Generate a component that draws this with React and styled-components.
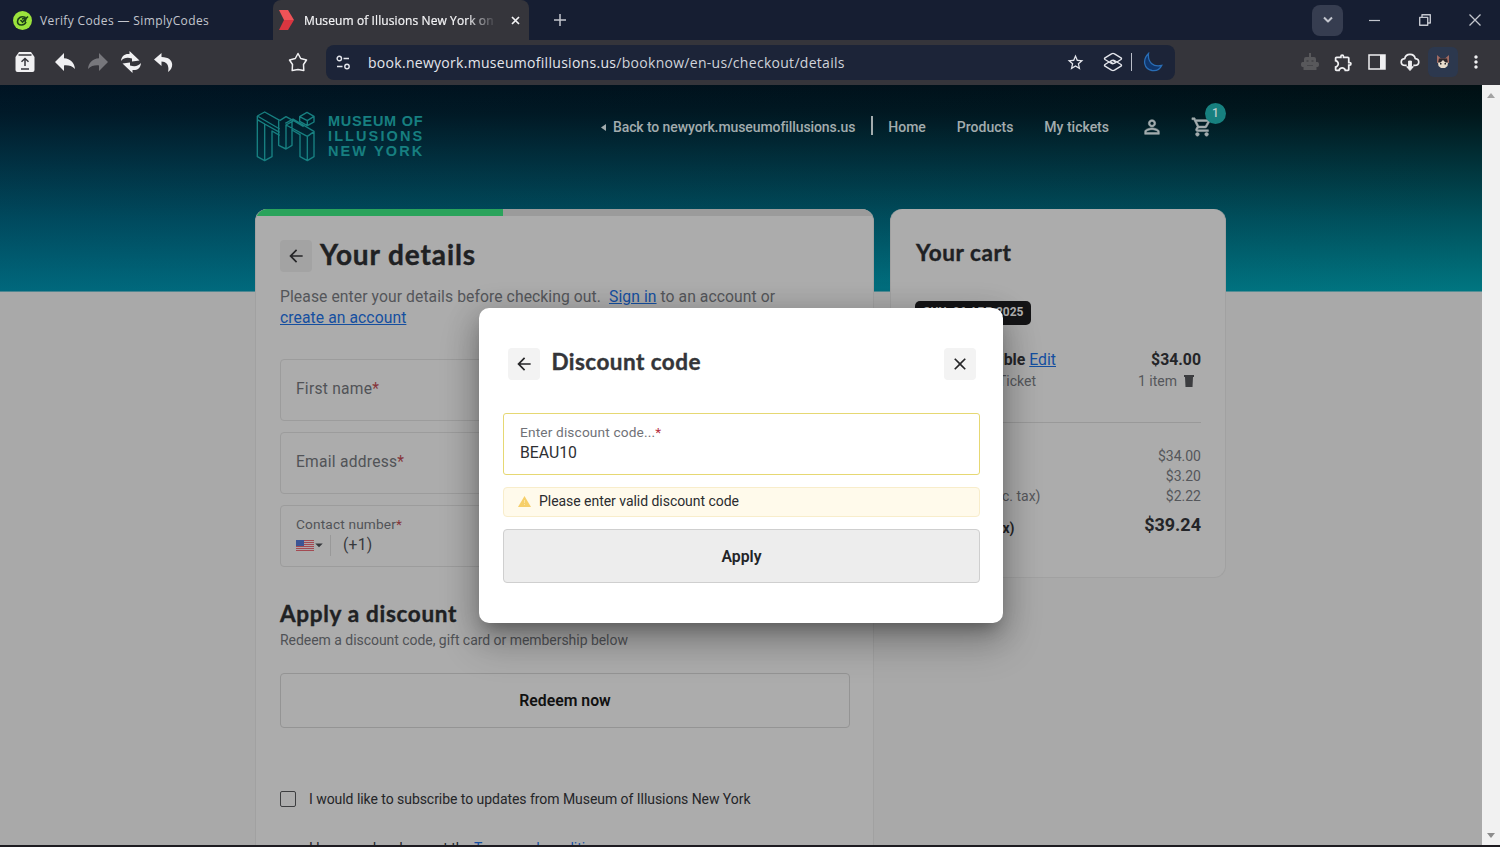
import React from "react";
import styled, { createGlobalStyle, css } from "styled-components";
import {
  MdArrowBack,
  MdArrowDropDown,
  MdClose,
  MdMoreVert,
  MdOutlineShoppingCart,
  MdPersonOutline,
  MdStarOutline,
  MdOutlineExtension,
} from "react-icons/md";

const GlobalStyle = createGlobalStyle`
  * {
    box-sizing: border-box;
  }
  body {
    margin: 0;
    overflow: hidden;
    background: #a9a9a9;
    font-family: Roboto, "Liberation Sans", sans-serif;
  }
  h1, h2, p {
    margin: 0;
  }
  svg {
    display: block;
    flex: none;
  }
`;

const Window = styled.div`
  width: 1500px;
  height: 847px;
  display: flex;
  flex-direction: column;
  overflow: hidden;
  border-bottom: 2px solid #1d1b20;
`;

/* ---------- browser chrome ---------- */

const TabBar = styled.div`
  height: 40px;
  flex: none;
  display: flex;
  background: #161e32;
  font-family: "Open Sans", "Noto Sans", sans-serif;
  font-size: 12px;
  color: #c3c6ce;
`;

const Tab = styled.div`
  display: flex;
  align-items: center;
  height: 40px;
  width: ${({ $width }) => $width}px;
  padding: 0 8px 0 ${({ $active }) => ($active ? 6 : 13)}px;
  border-radius: 8px 8px 0 0;
  white-space: nowrap;
  ${({ $active }) =>
    $active &&
    css`
      background: #35353b;
      color: #f4f4f6;
    `}
`;

const TabTitle = styled.span`
  margin-left: ${({ $gap }) => $gap}px;
  letter-spacing: ${({ $spacing }) => $spacing || 0}px;
  width: ${({ $width }) => $width}px;
  ${({ $fade }) =>
    $fade &&
    css`
      -webkit-text-stroke: 0.2px #f4f4f6;
      mask-image: linear-gradient(90deg, #000 84%, transparent);
    `}
`;

const TabClose = styled.span`
  margin-left: 14px;
`;

const NewTab = styled.div`
  display: flex;
  align-items: center;
  padding-left: 25px;
`;

const WindowControls = styled.div`
  margin-left: auto;
  display: flex;
  align-items: center;
  padding-right: 19px;
  gap: 38px;
`;

const TabSearch = styled.div`
  display: grid;
  place-items: center;
  width: 31px;
  height: 31px;
  margin-right: -13px;
  border-radius: 8px;
  background: #363d50;
`;

const Toolbar = styled.div`
  height: 45px;
  flex: none;
  display: flex;
  align-items: center;
  background: #35353b;
  color: #f0f0f2;
  padding: 0 17px 1px 14px;
`;

const NavIcons = styled.div`
  display: flex;
  align-items: center;
  gap: 11px;
  width: 274px;
`;

const AddressBar = styled.div`
  display: flex;
  align-items: center;
  width: 849px;
  height: 35px;
  margin-left: 18px;
  padding: 0 12px 0 10px;
  border-radius: 8px;
  background: #1c2438;
  color: #e4e6ec;
  font-family: "Open Sans", "Noto Sans", sans-serif;
  font-size: 14px;
`;

const Url = styled.span`
  margin-left: 17px;
  flex: 1;
  letter-spacing: 0.29px;
  white-space: nowrap;
  span {
    color: #d0d3db;
  }
`;

const AddressDivider = styled.span`
  width: 1px;
  height: 18px;
  margin: 0 11px 0 8px;
  background: #b9bdc8;
`;

const Extensions = styled.div`
  margin-left: auto;
  display: flex;
  align-items: center;
  gap: 14px;
`;

const Avatar = styled.div`
  display: grid;
  place-items: center;
  width: 30px;
  height: 30px;
  margin: 0 -6px;
  border-radius: 6px;
  background: #2c384e;
`;

/* ---------- page ---------- */

const Viewport = styled.div`
  position: relative;
  flex: 1;
  min-height: 0;
  display: flex;
`;

const Page = styled.div`
  width: 1482px;
  overflow: hidden;
  background-color: #a9a9a9;
  background-image: linear-gradient(
      90deg,
      rgba(0, 40, 105, 0.18),
      rgba(0, 40, 105, 0.06) 80%,
      transparent
    ),
    linear-gradient(#000f13, #01171b 14%, #013037 36%, #00525d 66%, #007681);
  background-size: 100% 206.5px;
  background-repeat: no-repeat;
`;

const Scrollbar = styled.div`
  width: 18px;
  display: flex;
  flex-direction: column;
  justify-content: space-between;
  align-items: center;
  padding: 8px 0 7px;
  background: #f1f1f1;
`;

const Header = styled.header`
  display: flex;
  align-items: flex-start;
  height: 124px;
  padding: 0 256px 0 256px;
  color: #a3acae;
`;

const Brand = styled.div`
  display: flex;
  align-items: center;
  margin-top: 26px;
  gap: 12px;
  color: #177f80;
  font: bold 14.5px/15px "Liberation Sans", sans-serif;
`;

const BrandLine = styled.div`
  letter-spacing: ${({ $spacing }) => $spacing}px;
  white-space: nowrap;
`;

const Nav = styled.nav`
  margin-left: auto;
  display: flex;
  align-items: center;
  margin-top: 32px;
  height: 20px;
  font-size: 14px;
  font-weight: 500;
  white-space: nowrap;
`;

const NavLink = styled.a`
  margin-left: ${({ $left }) => $left || 0}px;
  margin-right: ${({ $gap }) => $gap}px;
  letter-spacing: ${({ $spacing }) => $spacing || 0}px;
`;

const NavBar = styled.span`
  width: 2px;
  height: 19px;
  margin: -3px 15px 0 16px;
  background: #a3acae;
`;

const HeavyIcon = styled.span`
  path:not([fill="none"]) {
    stroke: currentColor;
    stroke-width: 0.6px;
  }
`;

const CartLink = styled(HeavyIcon)`
  position: relative;
  margin: 0 13px 0 28px;
`;

const CartBadge = styled.span`
  position: absolute;
  left: 14px;
  top: -13px;
  width: 21px;
  height: 21px;
  border-radius: 50%;
  background: #17807f;
  color: #b6c9c9;
  font-size: 12px;
  line-height: 21px;
  text-align: center;
`;

const Columns = styled.main`
  display: flex;
  align-items: flex-start;
  gap: 16px;
  padding-left: 255px;
`;

const Card = styled.section`
  width: ${({ $width }) => $width}px;
  height: ${({ $height }) => $height}px;
  overflow: hidden;
  border: 1px solid #a1a1a1;
  border-top: 0;
  border-radius: 12px;
  background: #acacac;
`;

const Progress = styled.div`
  height: 7px;
  background: #9b9b9b;
  &::before {
    content: "";
    display: block;
    width: 247px;
    height: 100%;
    background: #2aa35b;
  }
`;

const DetailsBody = styled.div`
  padding: 0 23px 0 24px;
`;

const Heading = styled.h1`
  font-family: Lato, sans-serif;
  font-weight: 700;
  font-size: ${({ $size }) => $size}px;
  line-height: 30px;
  letter-spacing: ${({ $spacing }) => $spacing || 0}px;
  color: ${({ $color }) => $color || "#202123"};
  -webkit-text-stroke: 0.4px ${({ $color }) => $color || "#202123"};
`;

const TitleRow = styled.div`
  display: flex;
  align-items: center;
  gap: ${({ $gap }) => $gap}px;
  margin-top: ${({ $top }) => $top || 0}px;
  h1,
  h2 {
    margin-top: -4px;
  }
`;

const SquareButton = styled.button`
  display: grid;
  place-items: center;
  width: 32px;
  height: 32px;
  padding: 0;
  border: 0;
  border-radius: 4px;
  background: ${({ $bg }) => $bg};
  color: #262628;
`;

const Intro = styled.p`
  margin: 14px 0 31px;
  font-size: 15.7px;
  line-height: 21px;
  letter-spacing: 0.08px;
  color: #54565a;
`;

const Link = styled.a`
  color: #154fa0;
  text-decoration: underline;
`;

const Field = styled.div`
  height: 62px;
  margin-bottom: ${({ $gap }) => $gap || 11}px;
  padding: ${({ $filled }) => ($filled ? "9px 15px" : "18px 15px")};
  border: 1px solid #9c9c9c;
  border-radius: 4px;
  font-size: 15.6px;
  line-height: 22px;
  letter-spacing: 0.25px;
  color: #515357;
`;

const Required = styled.span`
  color: ${({ $color }) => $color || "#86343a"};
`;

const SmallLabel = styled.div`
  font-size: 13.7px;
  line-height: 19px;
  letter-spacing: 0.15px;
`;

const Phone = styled.div`
  display: flex;
  align-items: center;
  height: 22px;
  color: #36383c;
  svg + svg {
    margin: 0 -4.5px;
  }
`;

const PhoneDivider = styled.span`
  width: 1px;
  height: 21px;
  margin: 0 12px 0 7px;
  background: #999;
`;

const Note = styled.p`
  margin-top: 1px;
  font-size: 14px;
  line-height: 20px;
  letter-spacing: -0.04px;
  color: #505256;
`;

const RedeemButton = styled.button`
  display: block;
  width: 100%;
  height: 55px;
  margin-top: 23px;
  border: 1px solid #949494;
  border-radius: 4px;
  background: transparent;
  font: 600 15.8px Roboto, sans-serif;
  color: #111;
`;

const Consent = styled.label`
  display: flex;
  align-items: center;
  gap: 13px;
  height: 20px;
  margin-top: ${({ $top }) => $top}px;
  font-size: 14px;
  line-height: 20px;
  letter-spacing: -0.05px;
  color: #242528;
`;

const Box = styled.span`
  width: 16px;
  height: 16px;
  border: ${({ $hidden }) => ($hidden ? 0 : "1px solid #3d3e40")};
  border-radius: 2px;
`;

/* ---------- cart ---------- */

const CartBody = styled.div`
  padding: 29px 24px 0 24px;
  h2 {
    padding-left: 1px;
  }
`;

const DateTag = styled.div`
  display: inline-block;
  height: 24px;
  margin: 33px 0 24px;
  padding: 0 8px;
  border-radius: 5px;
  background: #151517;
  color: #b2b2b2;
  font-size: 12px;
  font-weight: 700;
  line-height: 22px;
`;

const CartRow = styled.div`
  display: flex;
  justify-content: space-between;
  height: ${({ $height }) => $height || 20}px;
  line-height: ${({ $height }) => $height || 20}px;
  font-size: ${({ $size }) => $size || 14}px;
  font-weight: ${({ $bold }) => ($bold ? 700 : 400)};
  color: ${({ $bold }) => ($bold ? "#242528" : "#55575b")};
`;

const RowLabel = styled.span`
  width: ${({ $width }) => $width}px;
  padding-top: ${({ $drop }) => $drop || 0}px;
  text-align: right;
  white-space: nowrap;
  font-size: ${({ $size }) => $size || 14}px;
  a {
    font-weight: 400;
    font-size: 15.8px;
  }
`;

const Quantity = styled.span`
  display: flex;
  align-items: center;
  gap: 7px;
  margin-right: 7px;
`;

const Rule = styled.div`
  height: 1px;
  margin: 31px 0 23px;
  background: #999;
`;

/* ---------- modal ---------- */

const ModalLayer = styled.div`
  position: absolute;
  left: 479px;
  top: 223px;
  width: 524px;
  height: 315px;
  padding: 40px 23px 0 24px;
  border-radius: 10px;
  background: #fff;
  box-shadow: 0 11px 15px -7px rgba(0, 0, 0, 0.25),
    0 20px 38px 3px rgba(0, 0, 0, 0.2), 0 6px 30px 4px rgba(0, 0, 0, 0.16);
`;

const ModalTitle = styled(TitleRow)`
  padding: 0 4px 0 5px;
  button:last-child {
    margin-left: auto;
  }
`;

const CodeField = styled.div`
  height: 62px;
  margin-top: 33px;
  padding: 9px 16px;
  border: 1px solid #e6d873;
  border-radius: 3px;
  color: #707277;
`;

const CodeValue = styled.div`
  font-size: 15.8px;
  line-height: 22px;
  color: #2e3033;
`;

const Warning = styled.div`
  display: flex;
  align-items: center;
  gap: 8px;
  height: 30px;
  margin-top: 12px;
  padding: 0 13px 2px 14px;
  border: 1px solid #f8edcb;
  border-radius: 4px;
  background: #fffaeb;
  color: #2b2c2f;
  font-size: 14px;
  letter-spacing: -0.04px;
`;

const ApplyButton = styled.button`
  display: block;
  width: 100%;
  height: 54px;
  margin-top: 12px;
  padding-top: 2px;
  border: 1px solid #cfcfcf;
  border-radius: 4px;
  background: #ededed;
  color: #232427;
  font: 600 15.8px Roboto, sans-serif;
`;

const Stroke = ({ w = 18, h = 18, box = "0 0 18 18", width = 1.5, children }) => (
  <svg
    width={w}
    height={h}
    viewBox={box}
    fill="none"
    stroke="currentColor"
    strokeWidth={width}
    strokeLinejoin="round">
    {children}
  </svg>
);

const BoldArrow = ({ flip, color = "currentColor" }) => (
  <svg width="22" height="20" viewBox="0 0 22 20" fill={color}>
    <path
      transform={flip ? "matrix(-1 0 0 1 22 0)" : undefined}
      d="M10 1 1 10l9 9v-5.600c4.500-.3 8 .4 11 3.600-.5-6-4.500-10.200-11-10.700z"
    />
  </svg>
);

const MuseumLogo = () => (
  <Stroke w={60} h={51} box="47 63 180 153" width={4.2}>
    <path d="M51 78 73 66l45 25M51 78v122l22 12 22-12v-77l23 13M73 212V102l45 25M51 78l67 39M73 102l-22-13" />
    <path d="M115 91v75l22 11 18-11v-46l24 14v66l22 12 20-12v-76l-63-37-23 13M137 177v-72l64 34M201 212v-73l20-14M155 120v-24M137 105l23-13 30 18M118 92l19-12 22 12" />
    <path d="M178 80 200 67l21 12v17l-20 11-23-13zM178 80l23 12 20-13M201 92v15" />
  </Stroke>
);

const UsFlag = () => (
  <svg width="18" height="11" viewBox="0 0 18 11" shapeRendering="crispEdges">
    <path fill="#b0a6aa" d="M0 0h18v11H0z" />
    <path
      fill="#a34a52"
      d="M0 0h18v1H0zM0 2h18v1H0zM0 4h18v1H0zM0 6h18v1H0zM0 8h18v1H0zM0 10h18v1H0z"
    />
    <path fill="#3c5595" d="M0 0h8v6H0z" />
  </svg>
);

const BrowserTabs = () => (
  <TabBar>
    <Tab $width={273}>
      <svg width="19" height="19" viewBox="0 0 19 19">
        <circle cx="9.500" cy="9.500" r="9.500" fill="#9be33c" />
        <g fill="none" stroke="#1d4218" strokeWidth="1.600">
          <path d="M12.500 6.500C8 4.500 4.500 7 4.500 10.500c0 4.500 7 4.500 8.500.500M7.500 9l2 2L15 5.500" />
          <path d="m9 8 4-1-1 4" />
        </g>
      </svg>
      <TabTitle $gap={8} $spacing={0.37}>
        Verify Codes — SimplyCodes
      </TabTitle>
    </Tab>
    <Tab $active $width={256}>
      <svg width="16" height="20" viewBox="0 0 16 20">
        <path fill="#ef5357" d="M0 0h9l6 10H5z" />
        <path fill="#d93640" d="M5 10h10L9 20H0z" />
      </svg>
      <TabTitle $gap={9} $width={193} $spacing={0.1} $fade>
        Museum of Illusions New York on
      </TabTitle>
      <TabClose>
        <Stroke w={9} h={9} box="0 0 9 9" width={1.7}>
          <path d="m1 1 7 7M8 1 1 8" />
        </Stroke>
      </TabClose>
    </Tab>
    <NewTab>
      <Stroke w={12} h={12} box="0 0 12 12" width={1.5}>
        <path d="M6 0v12M0 6h12" />
      </Stroke>
    </NewTab>
    <WindowControls>
      <TabSearch>
        <Stroke w={10} h={8} box="0 0 10 8" width={2}>
          <path d="m1 1.500 4 4 4-4" />
        </Stroke>
      </TabSearch>
      <Stroke w={13} h={12} box="0 0 13 12" width={1.2}>
        <path d="M1 6.500h11" />
      </Stroke>
      <Stroke w={12} h={12} box="0 0 12 12" width={1.4}>
        <path d="M.7 3.400h8v7.900h-8zM3 3V.7h8.300V9H9" />
      </Stroke>
      <Stroke w={12} h={12} box="0 0 12 12" width={1.3}>
        <path d="m.5.5 11 11M11.500.5l-11 11" />
      </Stroke>
    </WindowControls>
  </TabBar>
);

const BrowserToolbar = () => (
  <Toolbar>
    <NavIcons>
      <svg width="22" height="22" viewBox="0 0 22 22">
        <path fill="#f0f0f2" d="M5 1h12l3.500 5v13a2 2 0 0 1-2 2h-15a2 2 0 0 1-2-2V6z" />
        <path
          fill="none"
          stroke="#35353b"
          strokeWidth="1.500"
          d="M4.500 4h13M11 15V7.500M7.500 10.800 11 7.500l3.500 3.300M7 18h8"
        />
      </svg>
      <span style={{ marginLeft: -4 }} />
      <BoldArrow />
      <BoldArrow flip color="#77777c" />
      <svg width="22" height="22" viewBox="0 0 22 22" fill="currentColor">
        <path d="M1 10C1.500 4.500 5 2.500 9.500 3V0l10 9.500L12 10.500V7.500C7 6 3.500 7 1 10z" />
        <path d="M21 12c-.5 5.500-4 7.500-8.500 7V22l-10-9.500 7.500-1V14.500c5 1.500 8.500.5 11-2.500z" />
      </svg>
      <svg width="20" height="21" viewBox="0 0 20 21" fill="currentColor">
        <path d="m8.500 1-7.500 6.500 7.500 6.500V9.500C14 9.500 16.500 14 15 20c7-5 5.500-15-6.500-15z" />
      </svg>
    </NavIcons>
    <Stroke w={20} h={20} box="0 0 20 20" width={1.5}>
      <path d="M10 1.500 12.700 6.500 18.500 8l-3 4.500.3 6L10 17.500 4.200 18.500l.3-6L1.500 8l5.800-1.500z" />
    </Stroke>
    <AddressBar>
      <Stroke w={15} h={15} box="0 0 15 15" width={1.4}>
        <circle cx="3.300" cy="3.500" r="2.200" />
        <path d="M7.500 3.500H13M1 11.500h5.500" />
        <circle cx="11" cy="11.500" r="2.200" />
      </Stroke>
      <Url>
        book.newyork.museumofillusions.us<span>/booknow/en-us/checkout/details</span>
      </Url>
      <MdStarOutline size={19} />
      <span style={{ width: 18 }} />
      <Stroke w={20} h={20} box="0 0 20 20" width={1.4}>
        <path d="M14 10 18 7.500Q19 6.500 18 5.800L11.500 1.800Q10 1 8.500 1.800L2 5.800Q1 6.500 2 7.500L8.500 11.500Q10 12.300 13 10.500L10 8.500" />
        <path d="M6 10 2 12.500Q1 13.500 2 14.200L8.500 18.200Q10 19 11.500 18.200L18 14.200Q19 13.500 18 12.500L11.500 8.500Q10 7.700 7 9.500L10 11.500" />
      </Stroke>
      <AddressDivider />
      <svg width="20" height="20" viewBox="0 0 20 20">
        <path
          fill="#10366c"
          stroke="#296db5"
          strokeWidth="1.300"
          d="M5.500 1.500C-1 8 1 17 9 18.500c4.500.7 8-1.500 9.700-5C10 15.500 4.500 10 5.500 1.500z"
        />
      </svg>
    </AddressBar>
    <Extensions>
      <svg width="18" height="18" viewBox="0 0 18 18">
        <path
          fill="#58585b"
          d="M8 0h2v4h3a2 2 0 0 1 2 2v3h1.500c2 0 2 5 0 5H15.500v3h-13v-3H1.500c-2 0-2-5 0-5H3V6a2 2 0 0 1 2-2h3z"
        />
        <path fill="#46464a" d="M5.500 7h2v2h-2zM10.500 7h2v2h-2zM6 12h6v1H6z" />
      </svg>
      <MdOutlineExtension size={21} />
      <svg width="18" height="16" viewBox="0 0 18 16">
        <path fill="none" stroke="#f0f0f2" strokeWidth="1.500" d="M1 1h16v14H1z" />
        <path fill="#f0f0f2" d="M12 1h5v14h-5z" />
      </svg>
      <Stroke w={20} h={20} box="0 0 21 20" width={1.8}>
        <path d="M7 13.500H5.500C0 13.500 0 7 5 6.500 6 .5 15 .5 16 6.500c5 .5 5 7-.5 7H14" />
        <path fill="currentColor" strokeWidth="1" d="M9 9h3v6h2l-3.500 4L7 15h2z" />
      </Stroke>
      <Avatar>
        <svg width="14" height="14" viewBox="0 0 14 14">
          <path fill="#a06a62" d="M1 0l4 3.500h4L13 0v8H1z" />
          <path fill="#2c262a" d="M3 3.500h8L12 8H2z" />
          <path fill="#e8dccb" d="M2 7.500h2.500L7 5l2.500 2.500H12l-.5 3.500L9 13H5l-2.500-2z" />
          <path fill="#2a282c" d="M4 8h1.500v1.500H4zM8.500 8H10v1.500H8.500z" />
        </svg>
      </Avatar>
      <MdMoreVert size={20} style={{ margin: "0 -3px 0 0" }} />
    </Extensions>
  </Toolbar>
);

const SiteHeader = () => (
  <Header>
    <Brand>
      <MuseumLogo />
      <div>
        <BrandLine $spacing={0.75}>MUSEUM OF</BrandLine>
        <BrandLine $spacing={2.1}>ILLUSIONS</BrandLine>
        <BrandLine $spacing={2.1}>NEW YORK</BrandLine>
      </div>
    </Brand>
    <Nav>
      <svg width="5" height="7" viewBox="0 0 5 7" fill="currentColor">
        <path d="M5 0v7L0 3.500z" />
      </svg>
      <NavLink $left={7} $gap={0} $spacing={-0.09}>
        Back to newyork.museumofillusions.us
      </NavLink>
      <NavBar />
      <NavLink $gap={31}>Home</NavLink>
      <NavLink $gap={31}>Products</NavLink>
      <NavLink $gap={32}>My tickets</NavLink>
      <HeavyIcon>
        <MdPersonOutline size={22} />
      </HeavyIcon>
      <CartLink>
        <MdOutlineShoppingCart size={22} />
        <CartBadge>1</CartBadge>
      </CartLink>
    </Nav>
  </Header>
);

const Details = () => (
  <Card $width={619} $height={680}>
    <Progress />
    <DetailsBody>
      <TitleRow $gap={8} $top={24}>
        <SquareButton $bg="#a3a3a3">
          <MdArrowBack size={20} />
        </SquareButton>
        <Heading $size={28} $spacing={0.9}>
          Your details
        </Heading>
      </TitleRow>
      <Intro>
        Please enter your details before checking out.&nbsp; <Link>Sign in</Link> to an
        account or
        <br />
        <Link>create an account</Link>
      </Intro>
      <Field>
        First name<Required>*</Required>
      </Field>
      <Field>
        Email address<Required>*</Required>
      </Field>
      <Field $filled $gap={32}>
        <SmallLabel>
          Contact number<Required>*</Required>
        </SmallLabel>
        <Phone>
          <UsFlag />
          <MdArrowDropDown size={18} />
          <PhoneDivider />
          (+1)
        </Phone>
      </Field>
      <Heading as="h2" $size={22.5} $spacing={0.7}>
        Apply a discount
      </Heading>
      <Note>Redeem a discount code, gift card or membership below</Note>
      <RedeemButton>Redeem now</RedeemButton>
      <Consent $top={61}>
        <Box />I would like to subscribe to updates from Museum of Illusions New York
      </Consent>
      <Consent $top={29}>
        <Box $hidden />
        <span>
          I have read and accept the <Link>Terms and conditions</Link>
        </span>
      </Consent>
    </DetailsBody>
  </Card>
);

const Cart = () => (
  <Card $width={336} $height={369}>
    <CartBody>
      <Heading as="h2" $size={22.5} $spacing={0.6}>
        Your cart
      </Heading>
      <DateTag>SUN, 06 APR 2025</DateTag>
      <CartRow $bold $size={15.8} $height={22}>
        <RowLabel $width={141} $size={15.8}>
          Flexible <Link>Edit</Link>
        </RowLabel>
        <span>$34.00</span>
      </CartRow>
      <CartRow>
        <RowLabel $width={121}>Ticket</RowLabel>
        <Quantity>
          1 item
          <svg width="10" height="12" viewBox="0 0 10 12" fill="#3c3d40">
            <path d="M0 0h10v2H0zM1 2h8l-.5 10h-7z" />
          </svg>
        </Quantity>
      </CartRow>
      <Rule />
      <CartRow>
        <RowLabel>Subtotal</RowLabel>
        <span>$34.00</span>
      </CartRow>
      <CartRow>
        <RowLabel>Tax</RowLabel>
        <span>$3.20</span>
      </CartRow>
      <CartRow>
        <RowLabel $width={125.5}>Fee (inc. tax)</RowLabel>
        <span>$2.22</span>
      </CartRow>
      <CartRow $bold $size={18} $height={38}>
        <RowLabel $width={99.5} $drop={3}>
          Total (inc. tax)
        </RowLabel>
        <span>$39.24</span>
      </CartRow>
    </CartBody>
  </Card>
);

const DiscountModal = () => (
  <ModalLayer>
    <ModalTitle $gap={11.5}>
      <SquareButton $bg="#f3f3f3">
        <MdArrowBack size={20} />
      </SquareButton>
      <Heading as="h2" $size={22.5} $spacing={0.45} $color="#343539">
        Discount code
      </Heading>
      <SquareButton $bg="#f3f3f3">
        <MdClose size={20} />
      </SquareButton>
    </ModalTitle>
    <CodeField>
      <SmallLabel>
        Enter discount code...<Required $color="#b53042">*</Required>
      </SmallLabel>
      <CodeValue>BEAU10</CodeValue>
    </CodeField>
    <Warning>
      <svg width="13" height="11" viewBox="0 0 13 11">
        <path fill="#f6cf6a" d="M6.500 0 13 11H0z" />
        <path fill="#fbe3a0" d="M6 4h1v3H6zM6 8h1v1H6z" />
      </svg>
      Please enter valid discount code
    </Warning>
    <ApplyButton>Apply</ApplyButton>
  </ModalLayer>
);

const App = () => (
  <>
    <GlobalStyle />
    <Window>
      <BrowserTabs />
      <BrowserToolbar />
      <Viewport>
        <Page>
          <SiteHeader />
          <Columns>
            <Details />
            <Cart />
          </Columns>
        </Page>
        <Scrollbar>
          <svg width="8" height="5" viewBox="0 0 8 5" fill="#a3a3a3">
            <path d="M4 0l4 5H0z" />
          </svg>
          <svg width="8" height="5" viewBox="0 0 8 5" fill="#8c8c8c">
            <path d="M0 0h8L4 5z" />
          </svg>
        </Scrollbar>
        <DiscountModal />
      </Viewport>
    </Window>
  </>
);

export default App;
